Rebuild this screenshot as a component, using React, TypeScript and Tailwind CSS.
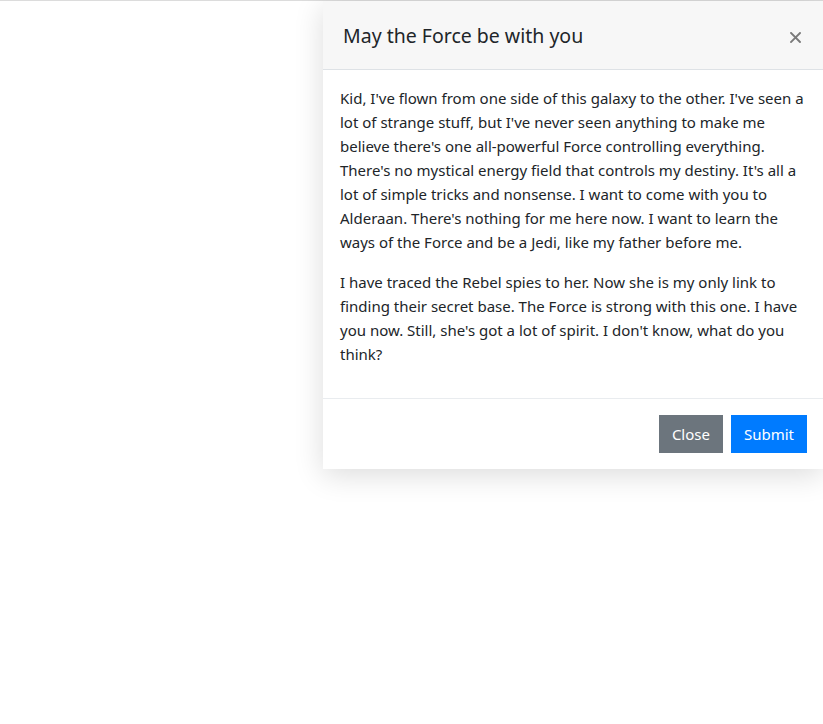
import React from "react";

const p1 = [
  "Kid, I've flown from one side of this galaxy to the other. I've seen a",
  "lot of strange stuff, but I've never seen anything to make me",
  "believe there's one all-powerful Force controlling everything.",
  "There's no mystical energy field that controls my destiny. It's all a",
  "lot of simple tricks and nonsense. I want to come with you to",
  "Alderaan. There's nothing for me here now. I want to learn the",
  "ways of the Force and be a Jedi, like my father before me.",
];
const p2 = [
  "I have traced the Rebel spies to her. Now she is my only link to",
  "finding their secret base. The Force is strong with this one. I have",
  "you now. Still, she's got a lot of spirit. I don't know, what do you",
  "think?",
];

export default function App() {
  return (
    <div
      className="min-h-[724px] w-full bg-white border-t border-[#dcdcdc] text-[#212529]"
      style={{ fontFamily: '"Noto Sans", "Open Sans", sans-serif' }}
    >
      <div className="flex justify-end">
        <div className="w-[500px] bg-white shadow-[0_6px_28px_rgba(0,0,0,0.14)]">
          <div className="flex items-center justify-between bg-[#f7f7f7] border-b border-[#dee2e6] pl-5 pr-[22px] pt-[2px] h-[69px]">
            <h5 className="text-[19.5px] leading-[30px] font-normal">May the Force be with you</h5>
            <button aria-label="Close" className="flex items-center justify-center w-[12px] h-[12px] mt-[2px]">
              <svg width="11" height="11" viewBox="0 0 11 11" fill="none">
                <path d="M1 1L10 10M10 1L1 10" stroke="#7a7a7a" strokeWidth="1.9" strokeLinecap="square" />
              </svg>
            </button>
          </div>
          <div className="px-[17px] pt-4 pb-4 text-[15px] leading-[24px]">
            <p className="mb-4">
              {p1.map((l, i) => (
                <span key={i} className="block whitespace-nowrap">{l}</span>
              ))}
            </p>
            <p className="mb-4">
              {p2.map((l, i) => (
                <span key={i} className="block whitespace-nowrap">{l}</span>
              ))}
            </p>
          </div>
          <div className="flex justify-end gap-2 border-t border-[#e9ecef] p-4">
            <button className="h-[38px] px-[13px] bg-[#6c757d] text-white text-[15px]">Close</button>
            <button className="h-[38px] px-[13px] bg-[#007bff] text-white text-[15px]">Submit</button>
          </div>
        </div>
      </div>
    </div>
  );
}
